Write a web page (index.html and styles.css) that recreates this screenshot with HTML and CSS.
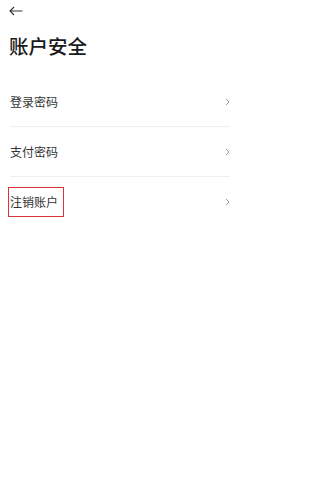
FILE: index.html
```html
<!DOCTYPE html>
<html lang="zh">
<head>
<meta charset="utf-8">
<link rel="stylesheet" href="styles.css">
</head>
<body>
<div class="page">
  <div class="topbar">
    <svg class="back" width="14" height="10" viewBox="0 0 14 10"><path d="M13.5 5H1M5 1L1 5l4 4" fill="none" stroke="#333" stroke-width="1.1"/></svg>
  </div>
  <h1 class="title">账户安全</h1>
  <ul class="list">
    <li class="row"><span class="label">登录密码</span><svg class="chev" width="5" height="8" viewBox="0 0 5 8"><path d="M1 1l3 3-3 3" fill="none" stroke="#999" stroke-width="1"/></svg></li>
    <li class="row"><span class="label">支付密码</span><svg class="chev" width="5" height="8" viewBox="0 0 5 8"><path d="M1 1l3 3-3 3" fill="none" stroke="#999" stroke-width="1"/></svg></li>
    <li class="row last"><span class="label marked">注销账户</span><svg class="chev" width="5" height="8" viewBox="0 0 5 8"><path d="M1 1l3 3-3 3" fill="none" stroke="#999" stroke-width="1"/></svg></li>
  </ul>
</div>
</body>
</html>
```
FILE: styles.css
```css
html, body {
  margin: 0;
  padding: 0;
  background: #fff;
}
body {
  font-family: "Noto Sans CJK SC", "Noto Sans", sans-serif;
  color: #222;
}
.page {
  width: 240px;
}
.topbar {
  height: 22px;
  padding: 6px 0 0 9px;
  box-sizing: border-box;
}
.back {
  display: block;
}
.title {
  margin: 0;
  padding: 10px 0 0 9px;
  font-size: 19.5px;
  line-height: 28px;
  font-weight: 500;
  color: #1a1a1a;
}
.list {
  list-style: none;
  margin: 17px 10px 0 10px;
  padding: 0;
}
.row {
  height: 50px;
  display: flex;
  align-items: center;
  justify-content: space-between;
  border-bottom: 1px solid #efefef;
  box-sizing: border-box;
}
.row.last {
  border-bottom: none;
}
.label {
  font-size: 12px;
  color: #333;
  line-height: 14px;
}
.marked {
  border: 1px solid #d9343a;
  padding: 7px 5px 7px 1px;
  margin-left: -2px;
}
.chev {
  display: block;
}
```
